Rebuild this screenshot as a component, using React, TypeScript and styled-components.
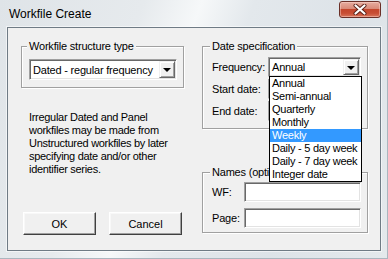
import styled, { createGlobalStyle } from "styled-components";

const GlobalStyle = createGlobalStyle`
  html, body {
    margin: 0;
    padding: 0;
    background: #dfe5e9;
  }
  body {
    font-family: "Liberation Sans", Arial, sans-serif;
    font-size: 11px;
    letter-spacing: -0.2px;
    color: #000;
  }
  * {
    box-sizing: border-box;
  }
`;

const Window = styled.div`
  width: 388px;
  height: 259px;
  display: flex;
  flex-direction: column;
  padding: 0 7px 8px;
  overflow: hidden;
  background: linear-gradient(
    110deg,
    #dfe4e8 0%,
    #e6eaed 30%,
    #f6f8f9 42%,
    #e3e8ec 53%,
    #dde3e8 75%,
    #e4e9ec 100%
  );
  box-shadow: inset -3px -3px 0 -2px #aab6bf;
`;

const TitleBar = styled.div`
  height: 27px;
  flex: none;
  display: flex;
  align-items: center;
  justify-content: space-between;
  padding-left: 2px;
`;

const Title = styled.span`
  font-size: 12px;
  letter-spacing: 0;
  color: #000;
  margin-top: 1px;
`;

const CloseButton = styled.button`
  align-self: flex-start;
  margin-top: 1px;
  width: 42px;
  height: 17px;
  padding: 0;
  display: flex;
  align-items: center;
  justify-content: center;
  border: 1px solid #6a2f27;
  border-radius: 3px;
  background: linear-gradient(
    to bottom,
    #e6ada0 0%,
    #d98a78 45%,
    #c4462c 50%,
    #c84e34 75%,
    #d9765c 100%
  );
  box-shadow: inset 0 0 0 1px rgba(255, 220, 210, 0.45);
`;

const Client = styled.div`
  flex: 1;
  display: grid;
  grid-template-columns: 163px 166px;
  column-gap: 18px;
  padding: 12px 12px 15px 13px;
  background: #f0f0f0;
  border: 1px solid #6f7b85;
  box-shadow: 0 0 0 1px rgba(255, 255, 255, 0.55);
`;

const Column = styled.div<{ $gap?: number }>`
  display: flex;
  flex-direction: column;
  gap: ${(p) => p.$gap ?? 0}px;
  min-height: 0;
`;

const Group = styled.fieldset<{ $pad: string }>`
  margin: 0;
  min-width: 0;
  padding: ${(p) => p.$pad};
  border: 1px solid #a0a0a0;
  box-shadow: inset 1px 1px 0 #fff, 1px 1px 0 #fff;
`;

const Legend = styled.legend`
  padding: 0 2px;
  margin-left: -2px;
  line-height: 13px;
  height: 13px;
  background: #f0f0f0;
`;

const Field = styled.div<{ $h: number }>`
  position: relative;
  height: ${(p) => p.$h}px;
  display: flex;
  align-items: stretch;
  padding: 1px;
  background: #fff;
  border: 1px solid;
  border-color: #a0a0a0 #fff #fff #a0a0a0;
  box-shadow: inset 1px 1px 0 #696969, inset -1px -1px 0 #e3e3e3;
`;

const FieldValue = styled.span`
  flex: 1;
  display: flex;
  align-items: center;
  padding-left: 2px;
  white-space: nowrap;
  overflow: hidden;
`;

const DropButton = styled.span`
  width: 16px;
  flex: none;
  display: flex;
  align-items: center;
  justify-content: center;
  background: #f0f0f0;
  border: 1px solid;
  border-color: #f0f0f0 #696969 #696969 #f0f0f0;
  box-shadow: inset 1px 1px 0 #fff, inset -1px -1px 0 #a0a0a0;

  &::after {
    content: "";
    width: 0;
    height: 0;
    border-left: 4px solid transparent;
    border-right: 4px solid transparent;
    border-top: 4px solid #000;
    margin-top: 1px;
  }
`;

const Note = styled.p`
  margin: 23px 0 0 8px;
  line-height: 13px;
  letter-spacing: -0.3px;
  white-space: nowrap;
`;

const ButtonRow = styled.div`
  margin-top: auto;
  padding-left: 2px;
  display: flex;
  gap: 13px;
`;

const PushButton = styled.button`
  width: 73px;
  height: 23px;
  padding: 0;
  font: inherit;
  color: #000;
  background: #f0f0f0;
  border: 1px solid;
  border-color: #fff #404040 #404040 #fff;
  box-shadow: inset -1px -1px 0 #a0a0a0, inset 1px 1px 0 #f8f8f8;
`;

const FormGrid = styled.div<{ $label: number; $gap: number }>`
  display: grid;
  grid-template-columns: ${(p) => p.$label}px 1fr;
  grid-auto-rows: 20px;
  row-gap: ${(p) => p.$gap}px;
  align-items: center;
`;

const Label = styled.span`
  white-space: nowrap;
`;

const DropList = styled.ul`
  position: absolute;
  z-index: 5;
  top: 100%;
  left: 0;
  width: 93px;
  margin: 0;
  padding: 0;
  list-style: none;
  background: #fff;
  border: 1px solid #000;
  letter-spacing: -0.25px;
`;

const DropItem = styled.li<{ $selected?: boolean }>`
  height: 13px;
  line-height: 13px;
  padding-left: 2px;
  white-space: nowrap;
  background: ${(p) => (p.$selected ? "#3399ff" : "transparent")};
  color: ${(p) => (p.$selected ? "#fff" : "#000")};
`;

const frequencies = [
  "Annual",
  "Semi-annual",
  "Quarterly",
  "Monthly",
  "Weekly",
  "Daily - 5 day week",
  "Daily - 7 day week",
  "Integer date",
];

const App = () => {
  return (
    <>
      <GlobalStyle />
      <Window>
        <TitleBar>
          <Title>Workfile Create</Title>
          <CloseButton aria-label="Close">
            <svg width="14" height="11" viewBox="0 0 14 11">
              <path
                d="M2.5 1.5 L11.5 9.5 M11.5 1.5 L2.5 9.5"
                stroke="#5a2016"
                strokeWidth="4"
                strokeLinecap="round"
              />
              <path
                d="M2.5 1.5 L11.5 9.5 M11.5 1.5 L2.5 9.5"
                stroke="#fff"
                strokeWidth="2.2"
                strokeLinecap="round"
              />
            </svg>
          </CloseButton>
        </TitleBar>

        <Client>
          <Column>
            <Group $pad="6px 6px 7px 7px">
              <Legend>Workfile structure type</Legend>
              <Field $h={21}>
                <FieldValue>Dated - regular frequency</FieldValue>
                <DropButton />
              </Field>
            </Group>

            <Note>
              Irregular Dated and Panel
              <br />
              workfiles may be made from
              <br />
              Unstructured workfiles by later
              <br />
              specifying date and/or other
              <br />
              identifier series.
            </Note>

            <ButtonRow>
              <PushButton>OK</PushButton>
              <PushButton>Cancel</PushButton>
            </ButtonRow>
          </Column>

          <Column $gap={37}>
            <Group $pad="4px 6px 7px 9px">
              <Legend>Date specification</Legend>
              <FormGrid $label={56} $gap={2}>
                <Label>Frequency:</Label>
                <Field $h={20}>
                  <FieldValue>Annual</FieldValue>
                  <DropButton />
                  <DropList>
                    {frequencies.map((f) => (
                      <DropItem key={f} $selected={f === "Weekly"}>
                        {f}
                      </DropItem>
                    ))}
                  </DropList>
                </Field>
                <Label>Start date:</Label>
                <Field $h={20} />
                <Label>End date:</Label>
                <Field $h={20} />
              </FormGrid>
            </Group>

            <Group $pad="3px 6px 4px 9px">
              <Legend>Names (optional)</Legend>
              <FormGrid $label={32} $gap={6}>
                <Label>WF:</Label>
                <Field $h={20} />
                <Label>Page:</Label>
                <Field $h={20} />
              </FormGrid>
            </Group>
          </Column>
        </Client>
      </Window>
    </>
  );
};

export default App;
